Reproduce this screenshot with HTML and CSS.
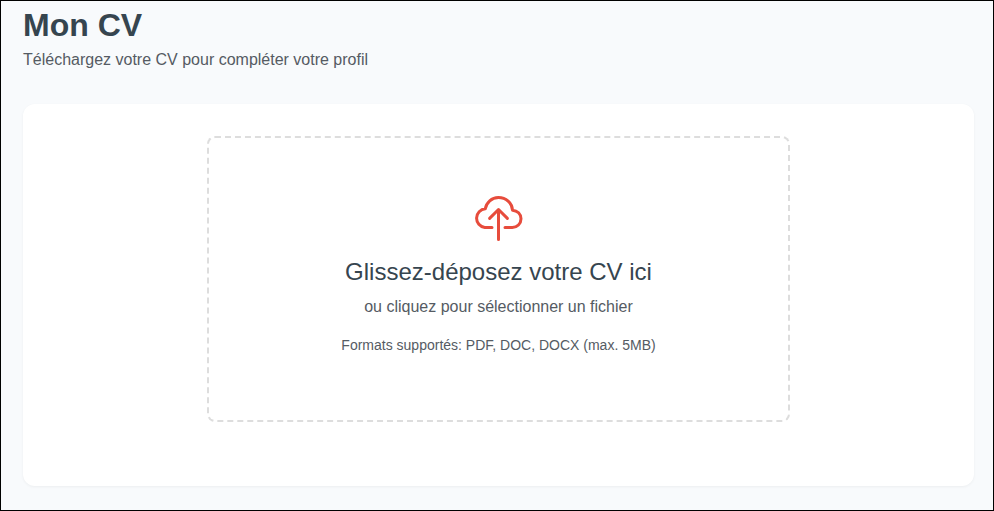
FILE: index.html
```html
<!DOCTYPE html>
<html lang="fr">
<head>
<meta charset="utf-8">
<title>Mon CV</title>
<link rel="stylesheet" href="styles.css">
</head>
<body>
<main class="page">
  <header class="page-header">
    <h1>Mon CV</h1>
    <p>Téléchargez votre CV pour compléter votre profil</p>
  </header>
  <section class="card">
    <div class="dropzone">
      <svg class="upload-icon" viewBox="0 0 49 48" fill="none" stroke="currentColor" stroke-width="3" stroke-linecap="round" stroke-linejoin="round" aria-hidden="true">
        <path d="M18 31.5H10.8A9.4 9.4 0 0 1 11.3 12.8C12.4 6.6 17.6 1.5 24.4 1.5C32 1.5 38.1 7 38.5 14.2C43.4 14.5 47 18 47 22.8A8.7 8.7 0 0 1 38.3 31.5H31"/>
        <path d="M24.5 43.5V13.5M15.6 22.4L24.5 13.5L33.4 22.4"/>
      </svg>
      <h2>Glissez-déposez votre CV ici</h2>
      <p class="hint">ou cliquez pour sélectionner un fichier</p>
      <p class="formats">Formats supportés: PDF, DOC, DOCX (max. 5MB)</p>
    </div>
  </section>
</main>
</body>
</html>
```
FILE: styles.css
```css
* { box-sizing: border-box; }
body { margin: 0; font-family: "Liberation Sans", Arial, sans-serif; font-size: 16px; line-height: 24px; }
h1, h2, p { margin: 0; }
.page { height: 511px; padding: 4px 19px 0 22px; border: 1px solid #000; background: #f8fafc; overflow: hidden; }
.page-header { height: 99px; color: #555b63; }
h1 { font-size: 32px; line-height: 38px; font-weight: 700; color: #36454f; padding-top: 1px; }
.page-header p { padding-top: 4px; }
.card { height: 382px; padding-top: 32px; border-radius: 12px; background: #fff; box-shadow: 0 1px 3px rgba(0,0,0,.05); }
.dropzone { width: 583px; height: 286px; margin: 0 auto; padding-top: 58px; border: 2px dashed #ddd; border-radius: 8px; display: flex; flex-direction: column; align-items: center; }
.upload-icon { width: 49px; height: 48px; color: #e74c3c; }
h2 { margin-top: 13px; font-size: 24px; line-height: 29px; font-weight: 400; color: #36454f; }
.hint { margin-top: 9px; color: #555b63; }
.formats { margin-top: 16px; font-size: 14px; line-height: 21px; color: #555b63; }
```
